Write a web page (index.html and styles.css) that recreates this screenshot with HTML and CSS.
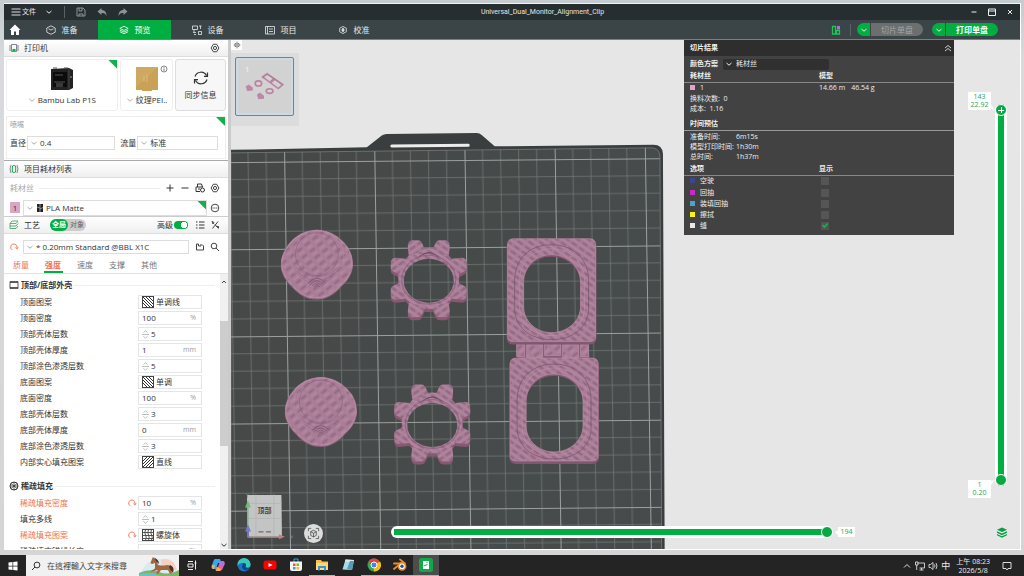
FILE: index.html
```html
<!DOCTYPE html>
<html lang="zh-CN">
<head>
<meta charset="utf-8">
<title>Universal_Dual_Monitor_Alignment_Clip</title>
<link rel="stylesheet" href="styles.css">
</head>
<body>
<svg class="defs" aria-hidden="true">
  <symbol id="chev" viewBox="0 0 8 8"><path d="M1.500 3 4 5.200 6.500 3" fill="none" stroke="currentColor"/></symbol>
  <symbol id="gearicon" viewBox="0 0 12 12"><path d="M4 1.500h4L10.700 6 8 10.500H4L1.300 6z" fill="none" stroke="currentColor" stroke-width="1.100" stroke-linejoin="round"/><circle cx="6" cy="6" r="1.900" fill="none" stroke="currentColor" stroke-width="1.100"/></symbol>
  <symbol id="revert" viewBox="0 0 12 12"><path d="M4 9.500A3.800 3.800 0 1 1 9.500 7M7.500 6.500 9.500 8.500 11 6" fill="none" stroke="currentColor" stroke-width="1.100"/></symbol>
  <symbol id="spin" viewBox="0 0 8 12"><path d="M1.500 4 4 1.800 6.500 4M1.500 8 4 10.200 6.500 8M0 6h8" fill="none" stroke="currentColor" stroke-width=".9"/></symbol>
  <symbol id="hatchA" viewBox="0 0 12 12"><rect x=".5" y=".5" width="11" height="11" fill="#fff" stroke="#444"/><path d="M1 1 11 11M4 1 11 8M7 1 11 5M1 4 8 11M1 7 5 11" stroke="#333" fill="none"/></symbol>
  <symbol id="hatchB" viewBox="0 0 12 12"><rect x=".5" y=".5" width="11" height="11" fill="#fff" stroke="#444"/><path d="M11 1 1 11M8 1 1 8M5 1 1 5M11 4 4 11M11 7 7 11" stroke="#333" fill="none"/></symbol>
  <symbol id="hatchC" viewBox="0 0 12 12"><rect x=".5" y=".5" width="11" height="11" fill="#fff" stroke="#444"/><path d="M3.500 1q-1.500 2.500 0 5t0 5M6.500 1q-1.500 2.500 0 5t0 5M9.500 1q-1.500 2.500 0 5t0 5M1 3.500h10M1 6.500h10M1 9.500h10" stroke="#444" fill="none" stroke-width=".9"/></symbol>
  <symbol id="layers" viewBox="0 0 12 12"><path d="M6 1.500 11 4 6 6.500 1 4zM1 6l5 2.500L11 6M1 8l5 2.500L11 8" fill="none" stroke="currentColor" stroke-width="1"/></symbol>
</svg>

<div class="desktop">
<main class="window">
  <header class="titlebar">
    <div class="title-left">
      <button class="filemenu"><svg class="i10" viewBox="0 0 10 10"><path d="M.5 2h9M.5 5h9M.5 8h9" stroke="#ddd"/></svg>文件</button>
      <button aria-label="展开菜单"><svg class="i8"><use href="#chev"/></svg></button>
      <span class="vsep"></span>
      <button class="dim" aria-label="保存"><svg class="i10" viewBox="0 0 10 10"><path d="M1 1h6l2 2v6H1zM3 1v3h3V1M3 9V7h4v2" fill="none" stroke="currentColor"/></svg></button>
      <button class="dim" aria-label="撤销"><svg class="i10" viewBox="0 0 10 10"><path d="M4.500 1 .5 4.500 4.500 8V6C7 6 8.500 6.500 9.500 9 9.500 5 7.500 3 4.500 3z" fill="currentColor"/></svg></button>
      <button class="dim" aria-label="重做"><svg class="i10" viewBox="0 0 10 10"><path d="M5.500 1 9.500 4.500 5.500 8V6C3 6 1.500 6.500.5 9 .5 5 2.500 3 5.500 3z" fill="currentColor"/></svg></button>
    </div>
    <h1>Universal_Dual_Monitor_Alignment_Clip</h1>
    <div class="title-right">
      <button aria-label="最小化"><svg class="i8" viewBox="0 0 8 8"><path d="M1.500 4h5" stroke="#eee"/></svg></button>
      <button aria-label="最大化"><svg class="i8" viewBox="0 0 8 8"><path d="M.5 1h7v6.500h-7zM.5 3h7" fill="none" stroke="#eee"/></svg></button>
      <button aria-label="关闭"><svg class="i8" viewBox="0 0 8 8"><path d="M2 2l4 4M6 2 2 6" stroke="#eee"/></svg></button>
    </div>
  </header>

  <nav class="tabs">
    <button class="home" aria-label="主页"><svg class="i12" viewBox="0 0 12 12"><path d="M6 .5.5 6H2v5h3V7.500h2V11h3V6h1.500z" fill="#fff"/></svg></button>
    <button class="tab"><svg class="i10" viewBox="0 0 10 10"><path d="M5 .8 9.200 3v4.200L5 9.300.8 7.200V3zM2.500 3.800 5 5l2.500-1.200" fill="none" stroke="currentColor" stroke-width=".8"/></svg>准备</button>
    <button class="tab active"><svg class="i10"><use href="#layers"/></svg>预览</button>
    <button class="tab"><svg class="i10" viewBox="0 0 10 10"><path d="M.5 1h5v3.500h-5zM2 4.500V7M1 7.500h3M7 1h2.500M8.500 1v3M6.500 6.500h3v3h-3zM2 9.500h2" fill="none" stroke="currentColor" stroke-width=".8"/></svg>设备</button>
    <button class="tab"><svg class="i10" viewBox="0 0 10 10"><path d="M.5 1.500h9v7.500h-9zM2.500 1.500V9M4 4h4M4 6.500h4" fill="none" stroke="currentColor" stroke-width=".8"/></svg>项目</button>
    <button class="tab"><svg class="i10" viewBox="0 0 10 10"><path d="M5 1.500 8.300 3.200v3.600L5 8.500 1.700 6.800V3.200z" fill="none" stroke="currentColor" stroke-width=".8"/><path d="M5 3v4M3.500 5h3" stroke="currentColor" stroke-width="1.400"/></svg>校准</button>
    <div class="tab-actions">
      <button aria-label="布局"><svg class="i10" viewBox="0 0 10 10"><path d="M1.500 1.500h3v7.500h-3zM5.500 5.500h3V9h-3z" fill="none" stroke="#21c25a" stroke-width="1.300"/><path d="M6 1h3v3.500H6z" fill="#9a78d8"/></svg></button>
      <span class="vsep"></span>
      <div class="split off"><button aria-label="切片选项"><svg class="i8"><use href="#chev"/></svg></button><button class="main">切片单盘</button></div>
      <div class="split"><button aria-label="打印选项"><svg class="i8"><use href="#chev"/></svg></button><button class="main">打印单盘</button></div>
    </div>
  </nav>

  <div class="body">
  <aside class="sidebar">
    <div class="section">
      <svg class="i10" viewBox="0 0 10 10"><path d="M2.500 1.500h5v7h-5zM1 2v6M9 2v6" fill="none" stroke="#667" stroke-width=".8"/><path d="M3.500 6h3v2h-3z" fill="#00ae42"/></svg>
      <h2>打印机</h2>
      <button class="end" aria-label="打印机设置"><svg class="i10"><use href="#gearicon"/></svg></button>
    </div>
    <div class="cards">
      <div class="card printer">
        <span class="corner"></span>
        <svg class="pic" viewBox="0 0 24 24"><path d="M1 2 19 1l4 2v18l-4 2H1z" fill="#222"/><path d="M3 5h14v15H3z" fill="#0b0b0c"/><path d="M5 8h8M4 15h11" stroke="#555"/><path d="M6 16h7v4H6z" fill="#39393b"/><path d="M19 2v20" stroke="#484848"/><path d="M3 1h4M14 1h4" stroke="#555"/><circle cx="21" cy="10" r="1" fill="#777"/></svg>
        <label class="pick"><svg class="i8"><use href="#chev"/></svg><select aria-label="打印机型号"><option>Bambu Lab P1S</option></select></label>
      </div>
      <div class="card plate">
        <svg class="info" viewBox="0 0 8 8"><circle cx="4" cy="4" r="3" fill="none" stroke="#555" stroke-width=".7"/><path d="M4 3.500V6M4 2v.8" stroke="#555" stroke-width=".8"/></svg>
        <svg class="pic" viewBox="0 0 24 24"><path d="M1 0h22v23h-6v1H7v-1H1z" fill="#c9a257"/><path d="M1 0h22L1 20z" fill="#cfa961"/><path d="M9 9v6M12 8v7" stroke="#dcbc7c"/></svg>
        <label class="pick"><svg class="i8"><use href="#chev"/></svg><select aria-label="打印板"><option>纹理PEI..</option></select></label>
      </div>
      <button class="card sync"><svg class="i18" viewBox="0 0 18 18"><path d="M3 7.500a6.300 6.300 0 0 1 11.500-1M15 10.500a6.300 6.300 0 0 1-11.500 1M15.500 3.500v3.800h-3.500M2.500 14.500v-3.800H6" fill="none" stroke="#333" stroke-width="1.200"/></svg>同步信息</button>
    </div>
    <div class="nozzle">
      <span class="corner"></span>
      <p>喷嘴</p>
      <div class="nozzle-row">
        <label for="dia">直径</label><span class="box wide"><svg class="i8"><use href="#chev"/></svg><select id="dia"><option>0.4</option></select></span>
        <label for="flow">流量</label><span class="box"><svg class="i8"><use href="#chev"/></svg><select id="flow"><option>标准</option></select></span>
      </div>
    </div>
    <div class="section">
      <svg class="i10" viewBox="0 0 10 10"><path d="M2 1Q0 5 2 9M8 1q2 4 0 8" fill="none" stroke="#667" stroke-width=".8"/><rect x="3.300" y="1.500" width="3.400" height="7" rx="1.500" fill="none" stroke="#00ae42"/></svg>
      <h2>项目耗材列表</h2>
    </div>
    <div class="filaments">
      <div class="fil-head"><span>耗材丝</span><i></i>
        <button aria-label="添加"><svg class="i10" viewBox="0 0 10 10"><path d="M5 1.500v7M1.500 5h7" stroke="#333"/></svg></button>
        <button aria-label="删除"><svg class="i10" viewBox="0 0 10 10"><path d="M1.500 5h7" stroke="#333"/></svg></button>
        <button aria-label="同步耗材"><svg class="i10" viewBox="0 0 10 10"><path d="M2.500 4V1h4l1 3M1 4h7M1 4v4.500h4M3 6h2" fill="none" stroke="#333"/><circle cx="7.500" cy="7" r="2" fill="none" stroke="#333"/></svg></button>
        <button aria-label="耗材设置"><svg class="i10"><use href="#gearicon"/></svg></button>
      </div>
      <div class="fil-row"><span class="chip">1</span>
        <span class="box"><span class="corner"></span><svg class="i8"><use href="#chev"/></svg><svg class="i8" viewBox="0 0 8 8"><path d="M1 0h6v8H1z" fill="#222"/><path d="M4 0v8M1 3l3 1M4 5l3-1.500" stroke="#bbb" stroke-width=".7"/></svg><select aria-label="耗材"><option>PLA Matte</option></select></span>
        <button aria-label="更多"><svg class="i10" viewBox="0 0 10 10"><circle cx="5" cy="5" r="3.800" fill="none" stroke="#444"/><path d="M2.500 5h5" stroke="#444" stroke-dasharray="1.200 .6"/></svg></button>
      </div>
    </div>
    <div class="section process">
      <svg class="i10 green" viewBox="0 0 10 10"><path d="M3 1h6L7 3.500H1zM1 6h6l2-2.500M1 8.500h6L9 6M1 3.500v5" fill="none" stroke="currentColor" stroke-width=".8"/></svg>
      <h2>工艺</h2>
      <div class="seg"><button class="on">全局</button><button>对象</button></div>
      <label class="end" for="adv">高级</label><input class="switch" type="checkbox" id="adv" checked>
      <button aria-label="列表"><svg class="i10" viewBox="0 0 10 10"><path d="M1 2h1.500M1 5h1.500M1 8h1.500M4 2h5.500M4 5h5.500M4 8h5.500" stroke="#333"/></svg></button>
      <button aria-label="对比"><svg class="i10" viewBox="0 0 10 10"><path d="M8 1.500 2.500 8.500M2 1.500 4 2.500 3 4zM5 4.500l3 3.500M6.500 6.500h2v2" fill="none" stroke="#333" stroke-width=".9"/></svg></button>
    </div>
    <div class="preset">
      <button class="orange" aria-label="还原"><svg class="i10"><use href="#revert"/></svg></button>
      <span class="box"><svg class="i8"><use href="#chev"/></svg><select aria-label="工艺预设"><option>* 0.20mm Standard @BBL X1C</option></select></span>
      <button aria-label="保存预设"><svg class="i10" viewBox="0 0 10 10"><path d="M3.500 2H1.500v6h7V4L7 2.500M3.500 2v2H6V2" fill="none" stroke="#444"/></svg></button>
      <button aria-label="搜索"><svg class="i10" viewBox="0 0 10 10"><circle cx="4" cy="4" r="2.800" fill="none" stroke="#444"/><path d="m6 6 3 3" stroke="#444"/></svg></button>
    </div>
    <div class="subtabs"><button class="orange">质量</button><button class="orange active">强度</button><button>速度</button><button>支撑</button><button>其他</button></div>
    <div class="scroller">
      <form class="params">
        <h3><svg class="i10" viewBox="0 0 10 10"><path d="M1 1.500h8v7H1zM1 2.500h8M1 7.500h8" fill="none" stroke="#333" stroke-width=".8"/></svg>顶部/底部外壳<i></i></h3>
        <div class="row"><label for="p1">顶面图案</label><span class="val"><svg class="i12"><use href="#hatchA"/></svg><select id="p1"><option>单调线</option></select></span></div>
        <div class="row"><label for="p2">顶面密度</label><span class="val"><input id="p2" value="100"><em>%</em></span></div>
        <div class="row"><label for="p3">顶部壳体层数</label><span class="val"><svg class="sp"><use href="#spin"/></svg><input id="p3" value="5"></span></div>
        <div class="row"><label for="p4">顶部壳体厚度</label><span class="val"><input id="p4" value="1"><em>mm</em></span></div>
        <div class="row"><label for="p5">顶部涂色渗透层数</label><span class="val"><svg class="sp"><use href="#spin"/></svg><input id="p5" value="5"></span></div>
        <div class="row"><label for="p6">底面图案</label><span class="val"><svg class="i12"><use href="#hatchA"/></svg><select id="p6"><option>单调</option></select></span></div>
        <div class="row"><label for="p7">底面密度</label><span class="val"><input id="p7" value="100"><em>%</em></span></div>
        <div class="row"><label for="p8">底部壳体层数</label><span class="val"><svg class="sp"><use href="#spin"/></svg><input id="p8" value="3"></span></div>
        <div class="row"><label for="p9">底部壳体厚度</label><span class="val"><input id="p9" value="0"><em>mm</em></span></div>
        <div class="row"><label for="p10">底部涂色渗透层数</label><span class="val"><svg class="sp"><use href="#spin"/></svg><input id="p10" value="3"></span></div>
        <div class="row"><label for="p11">内部实心填充图案</label><span class="val"><svg class="i12"><use href="#hatchB"/></svg><select id="p11"><option>直线</option></select></span></div>
        <h3><svg class="i10" viewBox="0 0 10 10"><circle cx="5" cy="5" r="4" fill="none" stroke="#333"/><path d="M1 5h8M5 1v8M2 2.500l6 5M8 2.500l-6 5" stroke="#333" stroke-width=".8"/></svg>稀疏填充<i></i></h3>
        <div class="row orange"><label for="p12">稀疏填充密度</label><svg class="i10"><use href="#revert"/></svg><span class="val"><input id="p12" value="10"><em>%</em></span></div>
        <div class="row"><label for="p13">填充多线</label><span class="val"><svg class="sp"><use href="#spin"/></svg><input id="p13" value="1"></span></div>
        <div class="row orange"><label for="p14">稀疏填充图案</label><svg class="i10"><use href="#revert"/></svg><span class="val"><svg class="i12"><use href="#hatchC"/></svg><select id="p14"><option>螺旋体</option></select></span></div>
        <div class="row"><label for="p15">稀疏填充锚线长度</label><span class="val"><svg class="sp"></svg><input id="p15" value="400%"><em>mm/%</em></span></div>
      </form>
      <div class="scrollbar"><svg class="i8" viewBox="0 0 8 8"><path d="M2 5 4 3l2 2" fill="none" stroke="#444"/></svg><span class="track"><span class="thumb"></span></span><svg class="i8"><use href="#chev"/></svg></div>
    </div>
  </aside>

  <section class="viewport">
    <svg class="scene" viewBox="231 40 790 510" preserveAspectRatio="xMinYMin slice" role="img" aria-label="打印盘">
      <defs>
        <pattern id="grid" width="90.300" height="87.250" patternUnits="userSpaceOnUse" patternTransform="matrix(1 -.009 .015 1 284.300 161.800)">
          <path d="M18.060 0v87.250M36.120 0v87.250M54.180 0v87.250M72.240 0v87.250M0 17.450h90.300M0 34.900h90.300M0 52.350h90.300M0 69.800h90.300" stroke="#858b89" stroke-width=".7" opacity=".75"/>
          <path d="M.5 0v87.250M0 .5h90.300" stroke="#9ba19e" stroke-width="1"/>
        </pattern>
        <pattern id="weave" width="10" height="8" patternUnits="userSpaceOnUse" patternTransform="rotate(-38)">
          <rect width="10" height="8" fill="#a97d96"/><ellipse cx="5" cy="2" rx="3.600" ry="1.300" fill="#966c86"/><ellipse cx="5" cy="6" rx="3.600" ry="1.100" fill="#b487a0"/>
        </pattern>
        <pattern id="weaveB" width="9" height="6" patternUnits="userSpaceOnUse" patternTransform="rotate(35)">
          <rect width="9" height="6" fill="#a97d96"/><ellipse cx="4.500" cy="1.500" rx="3.400" ry="1" fill="#8f6580"/><path d="M0 4.500h9" stroke="#b58aa3" stroke-width=".8"/>
        </pattern>
        <linearGradient id="bed" x2="1" y2="1"><stop offset="0" stop-color="#464847"/><stop offset=".5" stop-color="#464b4b"/><stop offset="1" stop-color="#484a49"/></linearGradient>
        <path id="disc" d="M0-34.500C9-34.500 17-31 24-25 32-18 36-10 36 0 36 8 31 16 25 21 17 30 10 34.500 0 34.500S-18 30-25 22C-31 16-36 9-36 0-36-10-31-18-24-25-17-31-9-34.500 0-34.500z"/>
        <g id="cog"><circle r="30.500"/><g id="q"><path id="t" d="M3-28 7-36Q8-38.500 11-38.500L17-38.500Q21-37.500 21-33L20-24z"/><path d="M28-3 35-7Q38-8 38-11L38-17Q37-21 33-21L23-20z"/></g><use href="#q" transform="scale(-1 1)"/><use href="#q" transform="scale(1 -1)"/><use href="#q" transform="scale(-1 -1)"/></g>
        <mask id="cogm"><rect x="-45" y="-45" width="90" height="95" fill="#fff"/><ellipse cy="1" rx="25" ry="22" fill="#000"/></mask>
        <g id="cap"><use href="#disc" fill="#8c607b" y="1"/><use href="#disc" fill="url(#weave)"/><use href="#disc" fill="none" stroke="#bd8fa9" stroke-width=".7" transform="scale(.97)"/>
          <circle cy="-7" r="27" fill="none" stroke="#b98ba5" stroke-width=".5"/><circle cx="0" cy="-10" r="21.500" fill="url(#weave)" stroke="#86607a" stroke-width=".6"/>
          <path d="M-21 3Q0 22 21 3M-20 7Q0 26 20 7M-16 13Q0 28 16 13" fill="none" stroke="#966a85" stroke-width=".6"/>
          <path d="M-9 19Q0 9 9 19M-7 21Q0 12 7 21M-5 22Q0 15 5 22M-3 23Q0 18 3 23" fill="none" stroke="#75506a" stroke-width=".7"/></g>
        <g id="gear" mask="url(#cogm)"><use href="#cog" fill="#87586f" y="2"/><use href="#cog" fill="url(#weaveB)" y="-1"/><ellipse cy="0" rx="27" ry="24.500" fill="none" stroke="#8a607b" stroke-width=".8"/><ellipse rx="29" ry="26.500" fill="none" stroke="#b58aa3" stroke-width=".5"/><path d="M-10-23Q0-31 10-23M-6-25q6-4 12 0" fill="none" stroke="#694860" stroke-width=".8"/></g>
        <g id="frame"><path fill-rule="evenodd" fill="#81566f" d="M7 1h76q7 0 7 7v91q0 7-7 7H7q-7 0-7-7V8q0-7 7-7zm38 17C28 18 17 31 17 45v23c0 15 12 27 28 27s29-12 29-27V45C74 31 62 18 45 18z"/>
          <path fill-rule="evenodd" fill="url(#weaveB)" stroke="#bb8ca6" stroke-width=".7" d="M7 0h76q6 0 6 6v92q0 5-6 5H7q-6 0-6-5V6q0-6 6-6zm38 16C28 16 17 29 17 43v25c0 14 12 26 28 26s29-12 29-26V43C74 29 62 16 45 16z"/>
          <path d="M45 6C22 6 8 21 8 42v28c0 18 15 31 37 31s37-13 37-31V42C82 21 68 6 45 6z" fill="none" stroke="#7d566e" stroke-width=".8"/>
          <path d="M45 10C26 10 13 23 13 42v27c0 16 13 28 32 28s33-12 33-28V42C78 23 64 10 45 10z" fill="none" stroke="#bb8ca6" stroke-width=".7"/></g>
      </defs>
      <rect x="231" y="40" width="1600" height="1200" fill="#e6e6e6"/>
      <path d="M231 150 367 147.500 382 135.500Q384 134 387 134L477 133Q480 133 482 135L495 146.500 654 145Q663 145 663.500 154L668 1200H231z" fill="#3a3e3e"/>
      <path d="M231 153 652 148Q660 148 660.500 157L665 1200H231z" fill="url(#bed)"/>
      <path d="M231 153 652 148Q660 148 660.500 157L665 1200H231z" fill="url(#grid)" stroke="#7d8381" stroke-width=".7"/>
      <path d="M392 146.200 468.500 145.300" stroke="#ececec" stroke-width="3" stroke-linecap="round"/>
      <use href="#cap" x="317" y="264.500"/><use href="#cap" x="321" y="412"/>
      <use href="#gear" transform="translate(429 280)"/><use href="#gear" transform="translate(432.500 424.500)"/>
      <path d="M517 343h72l1 16h-72z" fill="#865b75"/>
      <path d="M517 344h8v13h-8zM527 345h16v13h-16zM545 343h16v13h-16zM563 345h16v13h-16zM581 343h8v14h-8z" fill="url(#weave)" stroke="#bd8fa9" stroke-width=".7"/>
      <use href="#frame" x="507" y="239"/><use href="#frame" x="509.500" y="358.500"/>
      <g class="cube"><path d="M247 495.500h34.500l.5 42h-34.500z" fill="#c3c4c4"/><path d="M247 504h35M247 519h35M256 495v42M274 495v42" stroke="#b1b3b3" stroke-width=".7"/><text x="257.500" y="514">顶部</text><path d="M258.500 532.500h5M266 532.500h5" stroke="#555"/>
        <path d="M248 538V505" stroke="#78b07c"/><path d="m245 508 3-7 3 7z" fill="#76b97c"/><path d="M248 538h32" stroke="#b96f70" stroke-width="1.400"/><path d="m279 535 6 2.500-6 2.500z" fill="#c47c7c"/><path d="M248 538v-8" stroke="#7476bd" stroke-width="2"/><path d="m245 532 3-7 3 7z" fill="#7878c4"/><path d="m246 494 1.500 2 1.500-2M247.500 496v2.500" fill="none" stroke="#72a676" stroke-width=".6"/><path d="m291 536 2 3m0-3-2 3" stroke="#ad7171" stroke-width=".6"/></g>
    </svg>
    <button class="fold" aria-label="折叠侧栏"><svg class="i8" viewBox="0 0 8 8"><path d="M4 .5v7M2.800 2 .8 4l2 2zM5.200 2l2 2-2 2z" fill="none" stroke="#555" stroke-width=".7"/></svg></button>
    <div class="thumbs"><button class="plate-thumb" aria-label="盘 1"><b>1</b>
      <svg viewBox="0 0 56 56"><g fill="none" stroke="#bb83a3" stroke-width="1.600"><path d="m26 18.500 4.500-3 15.500 10.500-4.500 4z"/><path d="m33.500 24 4.500-3.500" stroke-width="2.500"/><ellipse cx="22" cy="25" rx="3.200" ry="2.500"/><ellipse cx="33" cy="32.500" rx="3.300" ry="2.300"/></g><g fill="#bd88a7"><path d="M9.500 28l3-2 4 3v3l-5.500.5zM20.500 36l3-2 4 3v3l-5.500.5z"/></g><path d="m26 20 5-4 14 10" fill="none" stroke="#9b6685" stroke-width=".5"/></svg></button></div>

    <section class="legend">
      <header><h2>切片结果</h2><button aria-label="收起"><svg class="i8" viewBox="0 0 8 8"><path d="M1 4 4 1.500 7 4M1 7l3-2.500L7 7" fill="none" stroke="#ddd" stroke-width=".9"/></svg></button></header>
      <div class="scheme"><label for="scheme">颜色方案</label><span><svg class="i8"><use href="#chev"/></svg><select id="scheme"><option>耗材丝</option></select></span></div>
      <table><thead><tr><th>耗材丝</th><th>模型</th></tr></thead><tbody><tr><td><i class="sw pink"></i>1</td><td><span class="len">14.66 m</span>46.54 g</td></tr></tbody></table>
      <p>换料次数:&nbsp; 0</p><p>成本:&nbsp; 1.16</p>
      <h3>时间预估</h3>
      <dl><dt>准备时间:</dt><dd>6m15s</dd><dt>模型打印时间:</dt><dd>1h30m</dd><dt>总时间:</dt><dd>1h37m</dd></dl>
      <table class="opts"><thead><tr><th>选项</th><th>显示</th></tr></thead><tbody>
        <tr><td><i class="sw blue"></i><label for="o1">空驶</label></td><td><input type="checkbox" id="o1"></td></tr>
        <tr><td><i class="sw magenta"></i><label for="o2">回抽</label></td><td><input type="checkbox" id="o2"></td></tr>
        <tr><td><i class="sw cyan"></i><label for="o3">装填回抽</label></td><td><input type="checkbox" id="o3"></td></tr>
        <tr><td><i class="sw yellow"></i><label for="o4">擦拭</label></td><td><input type="checkbox" id="o4"></td></tr>
        <tr><td><i class="sw white"></i><label for="o5">缝</label></td><td><input type="checkbox" id="o5" checked></td></tr>
      </tbody></table>
    </section>

    <div class="vslider"><input class="high" type="range" min="1" max="143" value="143" aria-label="最高层"><input class="low" type="range" min="1" max="143" value="1" aria-label="最低层"><output class="tip top">143<br>22.92</output><output class="tip bottom">1<br>0.20</output></div>
    <div class="hslider"><input type="range" min="0" max="194" value="194" aria-label="步进"><output class="tip">194</output></div>
    <button class="fit" aria-label="适应视图"><svg viewBox="0 0 14 14"><path d="M1.500 4.500v-3h3M9.500 1.500h3v3M12.500 9.500v3h-3M4.500 12.500h-3v-3M7 3.500 10 5v4l-3 1.700L4 9V5zM4 5l3 1.700L10 5M7 6.700v4" fill="none" stroke="#444" stroke-width=".8"/></svg></button>
    <button class="stack" aria-label="图层"><svg viewBox="0 0 12 12"><path d="M6 .5 11.500 3 6 5.500.5 3zM.5 4.500 6 7l5.500-2.500v1.900L6 9 .5 6.400zM.5 7.500 6 10l5.500-2.500v1.600L6 11.700.5 9.100z" fill="#0a9f42"/></svg></button>
  </section>
  </div>
</main>

<footer class="taskbar">
  <button class="start" aria-label="开始"><svg class="i10" viewBox="0 0 10 10"><path d="M.5 1.500 4.500 1v3.700h-4zM5.200.9 9.500.4v4.300H5.200zM.5 5.400h4V9l-4-.5zM5.200 5.400h4.300v4.200L5.200 9z" fill="#fff"/></svg></button>
  <label class="search"><svg class="i10" viewBox="0 0 10 10"><circle cx="6" cy="4" r="2.900" fill="none" stroke="#333"/><path d="M4 6 1 9" stroke="#333"/></svg><input placeholder="在這裡輸入文字來搜尋" aria-label="搜尋" lang="zh-TW">
    <svg class="horse" viewBox="0 0 40 20"><path d="M1 20Q5 4 20 3t19 17z" fill="#d8ecef"/><path d="M22 4q12-4 16 10H24z" fill="#f6cfc4"/><path d="M0 17q10-5 20-1t20-2v6H0z" fill="#7fb468"/><path d="M0 18q12-3 22 2H0z" fill="#72bdca"/><path d="M13 3l1-2 1.500 1.500L18 5l1 4q5 1 9 0 4 0 4 4l1 4-2 1-2-4-7 0-3 4-2-1 2-3-4 1-3 1 0-1 4-2.500 0-5.500-3 1-1.500-1z" fill="#a0663f"/><path d="M15 1.500q5 2 5 6.500l-3-3zM31 9q5 2 3 8-3-3-4-6z" fill="#4d2f25"/></svg></label>
  <div class="apps">
    <button aria-label="任務檢視"><svg viewBox="0 0 14 14"><path d="M3 3.500h5M3 6h5v3H3zM3 11.500h5M10.500 2.500v9M9.500 5h2" fill="none" stroke="#eee"/></svg></button>
    <button aria-label="Copilot"><svg viewBox="0 0 14 14"><path d="M4 1h5l1.500 4H7L5 11H2Q0 10 1 7l1.500-4Q3 1 4 1z" fill="#3ba7e8"/><path d="M5 13h4q2 0 3-3l1.500-4Q14 3 11 3H9L7 9H3.500z" fill="#e9609b"/><path d="M9 3h2q3 0 2.500 3l-.5 2-4-1z" fill="#a974e8"/><path d="M1 7l3 0-1 4H2Q0 10 1 7zM5 13h4l1-2-4-2z" fill="#f2b23c"/></svg></button>
    <button aria-label="Edge"><svg viewBox="0 0 14 14"><circle cx="7" cy="7" r="6.500" fill="#1675c8"/><path d="M.5 7A6.500 6.500 0 0 1 13.500 6q.5 3.500-3.500 3.500-2 0-1-2Q9 5 6.500 5 2 4.500.5 8z" fill="#39c7ba"/><path d="M6.500 5Q9 5 9 7.200 7.500 9 10 10q2 .5 3-1-2 4-5.500 3Q3 10 6.500 5z" fill="#10438b"/></svg></button>
    <button aria-label="YouTube"><svg viewBox="0 0 14 14"><rect x=".5" y="2.500" width="13" height="9" rx="2.500" fill="#f00"/><path d="M5.500 5v4L9.500 7z" fill="#fff"/></svg></button>
    <button aria-label="Store"><svg viewBox="0 0 14 14"><path d="M5 4V1h4v3" fill="none" stroke="#35a8e8"/><path d="M1 3.500h12V11q0 2-2 2H3q-2 0-2-2z" fill="#f5f5f5"/><path d="M4 5.500h2.500V8H4z" fill="#ef5326"/><path d="M7.500 5.500H10V8H7.500z" fill="#7dba28"/><path d="M4 9h2.500v2.500H4z" fill="#2f9fe4"/><path d="M7.500 9H10v2.500H7.500z" fill="#fab91c"/></svg></button>
    <button class="run" aria-label="檔案總管"><svg viewBox="0 0 14 14"><path d="M1 2h5l1 1.500h6V12H1z" fill="#f5c04b"/><path d="M1 5h12v7H1z" fill="#fbd978"/><path d="M3 8h8v4.500H9V10H5v2.500H3z" fill="#3f90d6"/></svg></button>
    <button aria-label="記事本"><svg viewBox="0 0 14 14"><path d="M4.500 1.500 13 2l-2 10-9.500-.5z" fill="#a8dbe8"/><path d="M4.500 1.500 13 2l-.5 2L4 3.500z" fill="#dfe8ea"/><path d="M9 3 6 11l5 1 2-9z" fill="#569cb2"/></svg></button>
    <button class="run" aria-label="Chrome"><svg viewBox="0 0 14 14"><circle cx="7" cy="7" r="6.500" fill="#35a853"/><path d="M7 7 1.300 3.800A6.500 6.500 0 0 1 12.700 4z" fill="#ea4335"/><path d="M7 7l6-3.500A6.500 6.500 0 0 1 7 13.500z" fill="#fbbc05"/><circle cx="7" cy="7" r="3" fill="#4285f4" stroke="#fff"/></svg></button>
    <button class="run" aria-label="Blender"><svg viewBox="0 0 14 14"><path d="m7 1.500 5 4M1 5.500h8M1 11l6-5" stroke="#e98b2a" stroke-width="1.800" stroke-linecap="round"/><circle cx="9" cy="8.300" r="4.400" fill="#e98b2a"/><circle cx="9" cy="8.300" r="2.800" fill="#fff"/><circle cx="9" cy="8.300" r="1.700" fill="#265787"/></svg></button>
    <button class="run current" aria-label="Bambu Studio"><svg viewBox="0 0 14 14"><rect width="14" height="14" rx="2.500" fill="#11a849"/><path d="M4 3h6v8H4z" fill="#fff"/><path d="m4.500 8 4-1.500M7.500 4.500h1" stroke="#11a849"/></svg></button>
  </div>
  <div class="tray">
    <svg class="i10" viewBox="0 0 10 10"><path d="M2 6.500 5 3.500l3 3" fill="none" stroke="#ddd"/></svg>
    <svg class="i10" viewBox="0 0 10 10"><path d="M2.500 2h7v5h-5M6.500 7v2M4.500 9h4M.5 1h2.500v3H.5zM1.700 4v5" fill="none" stroke="#ddd" stroke-width=".9"/></svg>
    <svg class="i10" viewBox="0 0 10 10"><path d="M1 3.500h1.500L5 1.500v7L2.500 6.500H1zM6.500 3.500q1 1.500 0 3M8 2q2 3 0 6" fill="none" stroke="#ddd" stroke-width=".9"/></svg>
    <span class="ime">中</span>
    <time>上午 08:23<br>2026/5/8</time>
    <svg class="i10" viewBox="0 0 10 10"><path d="M1 1.500h8v6H6L5 9 4 7.500H1z" fill="none" stroke="#ddd"/></svg>
  </div>
</footer>
</div>
</body>
</html>
```

FILE: styles.css
```css
* { box-sizing: border-box; }
body { margin: 0; font: 8px/12px "Open Sans", "Noto Sans CJK SC", sans-serif; color: #333; }
h1, h2, h3, p, dl, dd { margin: 0; font-size: inherit; font-weight: 400; }
button, input, select { font: inherit; color: inherit; background: none; border: 0; padding: 0; margin: 0; min-width: 0; outline: 0; }
button { display: inline-flex; align-items: center; justify-content: center; white-space: nowrap; }
select { appearance: none; white-space: nowrap; }
svg { display: block; flex: none; }
em { font-style: normal; }
.defs { position: absolute; width: 0; height: 0; }
.i8 { width: 8px; height: 8px; }
.i10 { width: 10px; height: 10px; }
.i12 { width: 12px; height: 12px; }
.i18 { width: 18px; height: 18px; }
.green { color: #3c9a5c; }
.orange { color: #f2704e; }

.desktop { height: 100vh; display: flex; flex-direction: column; padding-top: 3px; background: linear-gradient(#c6cbcf, #d8dadd 60px, #d5d5d5); overflow: hidden; }
.window { flex: 1; min-height: 0; display: flex; flex-direction: column; margin: 0 3px 5px 4px; border-top: 1px solid #f2f4f4; border-right: 1px solid #fff; border-bottom: 1px solid #fff; background: #fff; }

.titlebar { height: 16px; display: flex; align-items: center; background: #262e30; color: #e4e6e6; font-size: 7px; padding: 0 6px 0 7px; }
.titlebar h1 { flex: 1; padding-right: 13px; text-align: center; font-family: Roboto, sans-serif; }
.title-left { display: flex; align-items: center; gap: 11px; }
.filemenu { gap: 1px; margin-right: 1px; }
.filemenu + button { margin-left: -3px; }
.dim { color: #8d9394; }
.title-right { display: flex; gap: 10px; }
.vsep { width: 1px; height: 12px; background: #596163; }

.tabs { height: 20px; display: flex; background: #3b4446; color: #e8eaea; border-bottom: 1px solid #788082; }
.home { width: 21px; }
.tab { width: 73px; gap: 6px; }
.tab.active { background: #00ae42; color: #fff; }
.tab-actions { margin-left: auto; padding-right: 22px; display: flex; align-items: center; gap: 9px; }
.tab-actions .vsep { margin: 0 -3px 0 0; }
.split { display: flex; height: 13px; }
.split button { width: 13px; background: #00ae42; border-radius: 7px 0 0 7px; }
.split .main { width: 52px; margin-left: 1px; border-radius: 0 7px 7px 0; color: #fff; font-weight: 700; }
.split.off .main { background: #6c6f70; color: #a3a5a5; font-weight: 400; }

.body { flex: 1; min-height: 0; display: flex; }
.sidebar { width: 227px; flex: none; display: flex; flex-direction: column; background: #fff; border-right: 3px solid #cbcbcb; }
.section { height: 17px; flex: none; display: flex; align-items: center; gap: 10px; padding: 0 8px 0 5px; background: linear-gradient(#fff, #efefef); border-bottom: 1px solid #ddd; }
.section h2 { margin-left: -6px; margin-right: 2px; padding-left: 1px; }
.section .end { margin-left: auto; }
.cards { display: flex; gap: 2px; padding: 2px 2px 5px; }
.card { position: relative; height: 52px; border: 1px solid #eee; border-radius: 3px; display: flex; flex-direction: column; align-items: center; justify-content: space-between; padding: 7px 0 4px; }
.printer { flex: 113; }
.plate { flex: 52; }
.card.sync { flex: 50; background: #f7f7f7; border-color: #ddd; padding: 9px 0; }
.pic { width: 24px; height: 24px; }
.info { position: absolute; right: 4px; top: 5px; width: 8px; height: 8px; }
.pick, .box { display: flex; align-items: center; gap: 2px; color: #333; }
.pick > .i8:first-child, .box > .i8:nth-of-type(1) { color: #aaa; }
.corner { position: absolute; top: 0; right: 0; width: 9px; height: 9px; background: #12b14d; clip-path: polygon(0 0, 100% 0, 100% 100%); }
.nozzle { position: relative; height: 43px; margin: 0 2px; padding: 2px 7px 0 3px; border: 1px solid #eee; }
.nozzle p { color: #999; font-size: 7px; }
.nozzle-row { display: flex; align-items: center; gap: 1px; margin-top: 5px; }
.box { position: relative; border: 1px solid #ddd; height: 14px; padding-left: 2px; }
.nozzle .box { flex: 80; }
.nozzle .box.wide { flex: 88; }
.nozzle .box + label { margin-left: 4px; }
.nozzle + .section { margin-top: 1px; border-top: 1px solid #aaa; height: 18px; }
.filaments { height: 38px; padding: 3px 8px 0 6px; }
.fil-head { display: flex; align-items: center; gap: 5px; height: 14px; color: #aaa; }
.fil-head button { color: #333; }
.fil-head i, .params h3 i { flex: 1; border-top: 1px solid #eee; }
.fil-row { display: flex; align-items: center; margin-top: 4px; height: 17px; gap: 3px; }
.fil-row .box { flex: 1; height: 16px; }
.chip { width: 10px; height: 11px; line-height: 11px; background: #dba6c4; text-align: center; }
.process { height: 18px; border-top: 1px solid #ccc; gap: 8px; }
.process h2 { margin-left: -4px; }
.process .switch { margin-left: -7px; }
.process .switch + button { margin-left: -1px; margin-right: -3px; }
.seg { display: flex; border-radius: 6px; background: #ccc; font-size: 7px; height: 12px; color: #666; }
.seg button { width: 18px; border-radius: 6px; }
.seg .on { background: #00ae42; color: #fff; font-weight: 700; }
.switch { appearance: none; width: 14px; height: 8px; border-radius: 4px; background: radial-gradient(circle at 10px 4px, #fff 3px, transparent 3px) #00ae42; }
.preset { display: flex; align-items: center; gap: 5px; padding: 0 8px 0 5px; margin-top: 6px; }
.preset .box { flex: 1; margin-left: -1px; margin-right: 1px; }
.subtabs { display: flex; height: 20px; flex: none; padding: 2px 0 0 1px; border-bottom: 1px solid #e2e2e2; color: #777; }
.subtabs button { width: 32px; }
.subtabs .orange { color: #f2704e; }
.subtabs .active { font-weight: 700; position: relative; }
.subtabs .active::after { content: ""; position: absolute; left: 7px; right: 6px; bottom: 0; height: 2px; background: #00ae42; }
.scroller { flex: 1; min-height: 0; display: flex; overflow: hidden; }
.params { flex: 1; padding: 4px 5px 0; }
.params h3 { display: flex; align-items: center; gap: 2px; height: 14px; margin-bottom: 2px; font-weight: 700; }
.row + h3 { margin-top: 9px; }
.row { display: flex; align-items: center; height: 16px; padding-left: 11px; margin-right: 13px; }
.row label { flex: 1; }
.row .val { width: 64px; height: 14px; margin-left: 1px; display: flex; align-items: center; gap: 2px; padding: 0 5px 0 3px; border: 1px solid #e3e5e6; color: #333; }
.val input { flex: 1; width: 0; }
.val em { color: #999; font-size: 7px; }
.sp { width: 7px; height: 11px; color: #aaa; }
.scrollbar { width: 8px; display: flex; flex-direction: column; padding: 4px 0 0; background: #f0f0f0; }
.track { flex: 1; display: flex; flex-direction: column; padding-top: 35px; }
.thumb { flex: 0 1 57%; background: #cdcdcd; }

.viewport { position: relative; flex: 1; min-width: 0; overflow: hidden; background: #e6e6e6; }
.scene { position: absolute; inset: 0; width: 100%; height: 100%; }
.cube text { font: 700 7px "Noto Sans CJK SC", sans-serif; fill: #444; }
.fold { position: absolute; left: 0; top: 0; width: 11px; height: 10px; background: #fff; }
.thumbs { position: absolute; left: 0; top: 13px; padding: 4px; width: 68px; height: 73px; background: #dcdcdc; }
.plate-thumb { position: relative; width: 59px; height: 59px; border: 1px solid #3f8fd2; border-radius: 2px; background: #d2d2d2; box-shadow: inset 0 0 0 2px #cbdbe6; }
.plate-thumb b { position: absolute; left: 9px; top: 5px; color: #f2f2f2; font-weight: 400; }
.plate-thumb svg { width: 57px; height: 57px; }

.legend { position: absolute; right: 66px; top: 0; width: 270px; background: #424242; color: #eee; font-size: 7px; line-height: 10px; padding-bottom: 4px; }
.legend header { display: flex; align-items: center; justify-content: space-between; height: 16px; padding: 0 2px 0 6px; background: #2e2e2e; }
.legend h2, .legend h3, .legend th, .scheme label { font-weight: 700; text-align: left; }
.scheme { display: flex; align-items: center; gap: 5px; padding: 2px 6px 0; height: 14px; }
.scheme span { display: flex; align-items: center; gap: 3px; width: 106px; height: 11px; padding-left: 2px; background: #303030; border-radius: 2px; }
.legend table { width: 100%; border-collapse: collapse; table-layout: fixed; }
.legend th { height: 12px; padding: 0 6px; border-bottom: 1px solid #888; }
.legend th:last-child, .legend td:last-child { padding-left: 0; }
.legend td { padding: 0 6px; height: 12px; }
.legend .opts td { height: 11px; }
.legend .opts tr:first-child td { height: 12px; }
.len { margin-right: 6px; }
.sw { display: inline-block; width: 5px; height: 5px; margin-right: 5px; }
.pink { background: #e0a5c2; }
.blue { background: #3f4691; }
.magenta { background: #c42dc4; }
.cyan { background: #4ba3c7; }
.yellow { background: #f5f50e; }
.white { background: #e8e8e8; }
.legend p { padding: 0 6px; }
.legend h3 { margin-top: 5px; padding: 0 6px 1px; border-bottom: 1px solid #999; }
.legend dl { display: grid; grid-template-columns: 46px 1fr; padding: 1px 6px 1px; white-space: nowrap; }
.legend input { appearance: none; display: block; width: 8px; height: 8px; margin-left: 2px; background: #555; }
.legend input:checked { background: linear-gradient(#00ae42, #00ae42) 0 0 / 0 0 no-repeat #4d5750; }
.legend input:checked::after { content: ""; display: block; width: 8px; height: 8px; background: #00c04a; clip-path: polygon(12% 50%, 25% 38%, 42% 56%, 76% 18%, 90% 32%, 42% 84%); }

.tip { position: absolute; background: #fff; color: #2f9f58; font-size: 7px; line-height: 8px; text-align: center; }
.tip::after { content: ""; position: absolute; width: 4px; height: 5px; background: #fff; }
.tip.top::after { left: 100%; bottom: 0; clip-path: polygon(0 0, 100% 100%, 0 80%); }
.tip.bottom::after { left: 100%; top: 0; clip-path: polygon(0 20%, 100% 0, 0 100%); }
.hslider .tip::after { right: 100%; top: 3px; width: 3px; clip-path: polygon(100% 0, 0 50%, 100% 100%); }
.vslider { position: absolute; right: 13px; top: 64px; bottom: 63px; width: 12px; }
.vslider input { appearance: none; position: absolute; inset: 0; width: 12px; height: 100%; writing-mode: vertical-lr; direction: rtl; }
.vslider .high::-webkit-slider-runnable-track { width: 12px; height: 100%; border-radius: 6px; background: linear-gradient(#00ae42, #00ae42) center / 6px 100% no-repeat #fff; }
.vslider input::-webkit-slider-thumb { appearance: none; width: 12px; height: 12px; border: 1px solid #fff; border-radius: 50%; background: #08a844; pointer-events: auto; }
.vslider .low { pointer-events: none; }
.vslider .high::-webkit-slider-thumb { background: linear-gradient(#fff, #fff) center / 6px 1px no-repeat, linear-gradient(#fff, #fff) center / 1px 6px no-repeat, #08a844; }
.vslider .tip { right: 16px; width: 23px; padding: 1px 0; }
.tip.top { top: -12px; }
.tip.bottom { bottom: -12px; }
.hslider { position: absolute; left: 160px; right: 187px; bottom: 11px; height: 12px; }
.hslider input { appearance: none; display: block; width: 100%; height: 12px; }
.hslider input::-webkit-slider-runnable-track { height: 12px; border-radius: 6px; background: linear-gradient(#00ae42, #00ae42) center / calc(100% - 6px) 6px no-repeat #fff; }
.hslider input::-webkit-slider-thumb { appearance: none; width: 12px; height: 12px; border: 1px solid #fff; border-radius: 50%; background: #08a844; }
.hslider .tip { left: calc(100% + 5px); top: 1px; width: 17px; padding: 1px 0; }
.fit { position: absolute; left: 73px; bottom: 6px; width: 19px; height: 19px; border-radius: 50%; background: #dcdcdc; }
.fit svg { width: 13px; height: 13px; }
.stack { position: absolute; right: 12px; bottom: 11px; }
.stack svg { width: 12px; height: 11px; }

.taskbar { height: 21px; flex: none; display: flex; background: #242424; color: #eee; }
.start { width: 26px; }
.search { display: flex; align-items: center; gap: 6px; width: 153px; padding-left: 5px; background: #f1f1f1; color: #333; }
.search input { flex: 1; width: 0; font-family: "Open Sans", "Noto Sans CJK TC", sans-serif; }
.search input::placeholder { color: #444; }
.horse { width: 40px; height: 20px; }
.apps { display: flex; }
.apps button { width: 26px; border-bottom: 1px solid transparent; }
.apps svg { width: 14px; height: 14px; }
.apps .run { border-bottom-color: #84bfea; }
.apps .current { background: #4c4c4c; }
.tray { margin-left: auto; padding-right: 12px; display: flex; align-items: center; gap: 3px; font-size: 7px; line-height: 9px; }
.tray time { text-align: center; margin: 0 9px 0 3px; }
.ime { font-size: 9px; }
```
